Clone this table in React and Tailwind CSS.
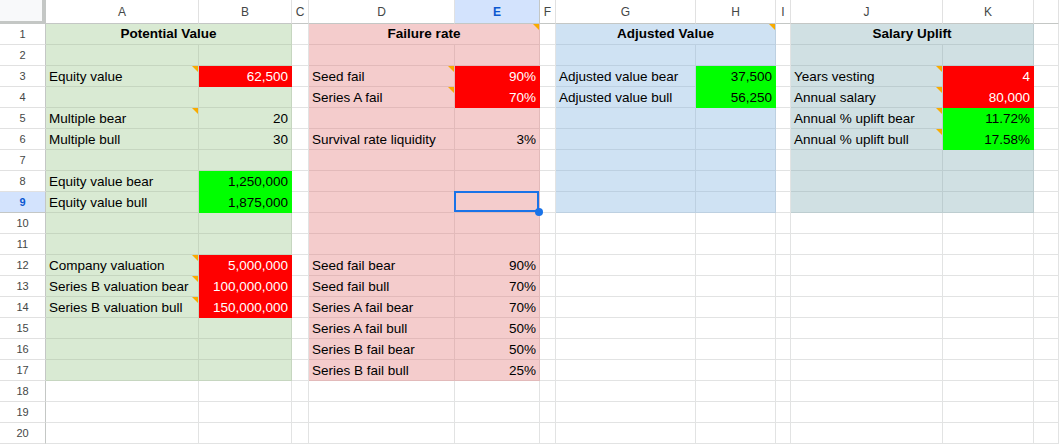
import React from 'react';

const COLS = ['A', 'B', 'C', 'D', 'E', 'F', 'G', 'H', 'I', 'J', 'K', 'L'];
const ROWS = Array.from({ length: 20 }, (_, i) => i + 1);

const FILLS = {
    green: 'bg-[#d9ead3] border-[#c6d6c0]',
    pink: 'bg-[#f4cccc] border-[#e2baba]',
    blue: 'bg-[#cfe2f3] border-[#bdd0e1]',
    cyan: 'bg-[#d0e0e3] border-[#bdcdd0]',
    white: 'bg-white border-[#e2e3e3]',
    red: 'bg-[#ff0000] border-[#ff0000] text-white',
    lime: 'bg-[#00ff00] border-[#00ff00] text-black',
};

// merged title cells on row 1
const TITLES = {
    A: { text: 'Potential Value', fill: 'green' },
    D: { text: 'Failure rate', fill: 'pink', note: true },
    G: { text: 'Adjusted Value', fill: 'blue', note: true },
    J: { text: 'Salary Uplift', fill: 'cyan' },
};

const cells = {
    A3: { v: 'Equity value', note: true }, B3: { v: '62,500', num: true, fill: 'red' },
    A5: { v: 'Multiple bear', note: true }, B5: { v: '20', num: true },
    A6: { v: 'Multiple bull' }, B6: { v: '30', num: true },
    A8: { v: 'Equity value bear' }, B8: { v: '1,250,000', num: true, fill: 'lime' },
    A9: { v: 'Equity value bull' }, B9: { v: '1,875,000', num: true, fill: 'lime' },
    A12: { v: 'Company valuation', note: true }, B12: { v: '5,000,000', num: true, fill: 'red' },
    A13: { v: 'Series B valuation bear', note: true }, B13: { v: '100,000,000', num: true, fill: 'red' },
    A14: { v: 'Series B valuation bull', note: true }, B14: { v: '150,000,000', num: true, fill: 'red' },

    D3: { v: 'Seed fail', note: true }, E3: { v: '90%', num: true, fill: 'red' },
    D4: { v: 'Series A fail', note: true }, E4: { v: '70%', num: true, fill: 'red' },
    D6: { v: 'Survival rate liquidity' }, E6: { v: '3%', num: true },
    D12: { v: 'Seed fail bear' }, E12: { v: '90%', num: true },
    D13: { v: 'Seed fail bull' }, E13: { v: '70%', num: true },
    D14: { v: 'Series A fail bear' }, E14: { v: '70%', num: true },
    D15: { v: 'Series A fail bull' }, E15: { v: '50%', num: true },
    D16: { v: 'Series B fail bear' }, E16: { v: '50%', num: true },
    D17: { v: 'Series B fail bull' }, E17: { v: '25%', num: true },

    G3: { v: 'Adjusted value bear' }, H3: { v: '37,500', num: true, fill: 'lime' },
    G4: { v: 'Adjusted value bull' }, H4: { v: '56,250', num: true, fill: 'lime' },

    J3: { v: 'Years vesting', note: true }, K3: { v: '4', num: true, fill: 'red' },
    J4: { v: 'Annual salary', note: true }, K4: { v: '80,000', num: true, fill: 'red' },
    J5: { v: 'Annual % uplift bear', note: true }, K5: { v: '11.72%', num: true, fill: 'lime' },
    J6: { v: 'Annual % uplift bull', note: true }, K6: { v: '17.58%', num: true, fill: 'lime' },
};

function regionFill(col, row) {
    if ((col === 'A' || col === 'B') && row <= 17) return 'green';
    if ((col === 'D' || col === 'E') && row <= 17) return 'pink';
    if ((col === 'G' || col === 'H') && row <= 9) return 'blue';
    if ((col === 'J' || col === 'K') && row <= 9) return 'cyan';
    return 'white';
}

function Note() {
    return <span className="absolute top-0 right-0 w-0 h-0 border-l-[6px] border-l-transparent border-t-[6px] border-t-[#f9ab00]" />;
}

function Cell({ col, row }) {
    const c = cells[col + row] || {};
    const fill = FILLS[c.fill || regionFill(col, row)];
    const selected = col === 'E' && row === 9;
    return (
        <div className={`relative h-[21px] border-r border-b px-[3px] pt-[1px] flex items-center overflow-visible whitespace-nowrap ${fill} ${c.num ? 'justify-end' : 'justify-start'}`}>
            <span className="leading-none">{c.v}</span>
            {c.note && <Note />}
            {selected && (
                <>
                    <div className="absolute -left-px -top-px right-0 bottom-0 border-2 border-[#1a73e8] z-10" />
                    <div className="absolute right-[-4px] bottom-[-4px] w-[8px] h-[8px] rounded-full bg-[#1a73e8] z-20" />
                </>
            )}
        </div>
    );
}

export default function App() {
    return (
        <div className="w-[1059px] h-[444px] overflow-hidden bg-white text-[13.5px] text-black" style={{ fontFamily: '"Liberation Sans", Arial, sans-serif' }}>
            <div className="grid grid-cols-[46px_153px_93px_17px_146px_85px_16px_140px_80px_15px_152px_91px_1fr]">
                {/* column headers */}
                <div className="h-[24px] bg-[#f8f9fa] border-r-4 border-b-[3px] border-[#c4c7c5]" />
                {COLS.map((col) => (
                    <div key={col}
                        className={`h-[24px] border-r border-b flex items-center justify-center text-[12px] ${col === 'E' ? 'bg-[#d3e3fd] text-[#0b57d0] font-bold border-r-[#c4c7c5] border-b-[#c4c7c5]' : 'bg-white text-[#444746] border-r-[#e1e1e1] border-b-[#c4c7c5]'}`}>
                        {col === 'L' ? '' : col}
                    </div>
                ))}

                {ROWS.map((row) => (
                    <React.Fragment key={row}>
                        <div className={`h-[21px] border-r border-b flex items-center justify-center text-[11px] ${row === 9 ? 'bg-[#d3e3fd] text-[#0b57d0] font-bold border-r-[#c4c7c5] border-b-[#c4c7c5]' : 'bg-white text-[#444746] border-r-[#c4c7c5] border-b-[#e1e1e1]'}`}>
                            {row}
                        </div>
                        {row === 1
                            ? COLS.map((col, i) => {
                                if (TITLES[col]) {
                                    const t = TITLES[col];
                                    return (
                                        <div key={col} className={`relative col-span-2 h-[21px] border-r border-b pt-[1px] flex items-center justify-center font-bold ${FILLS[t.fill]}`}>
                                            {t.text}
                                            {t.note && <Note />}
                                        </div>
                                    );
                                }
                                if (i > 0 && TITLES[COLS[i - 1]]) return null;
                                return <Cell key={col} col={col} row={row} />;
                            })
                            : COLS.map((col) => <Cell key={col} col={col} row={row} />)}
                    </React.Fragment>
                ))}
            </div>
        </div>
    );
}
